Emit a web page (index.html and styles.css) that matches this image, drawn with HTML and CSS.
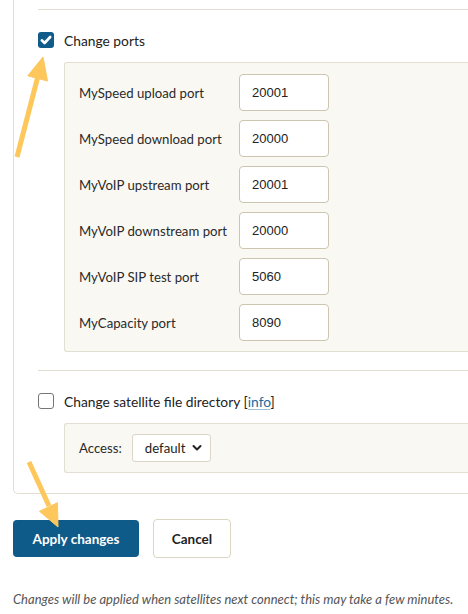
FILE: index.html
```html
<!DOCTYPE html>
<html>
<head>
<meta charset="utf-8">
<link rel="stylesheet" href="styles.css">
</head>
<body>
<div class="page">
  <div class="panel">
    <hr class="sep">
    <div class="section">
      <label class="check-row">
        <span class="cb cb-on"><svg viewBox="0 0 16 16" width="16" height="16"><path d="M3.8 8.3 L6.6 11 L12.2 5" fill="none" stroke="#fff" stroke-width="2.6" stroke-linecap="round" stroke-linejoin="round"/></svg></span>
        <span class="check-text">Change ports</span>
      </label>
      <div class="box ports">
        <span class="lbl">MySpeed upload port</span><span class="inp">20001</span>
        <span class="lbl">MySpeed download port</span><span class="inp">20000</span>
        <span class="lbl">MyVoIP upstream port</span><span class="inp">20001</span>
        <span class="lbl">MyVoIP downstream port</span><span class="inp">20000</span>
        <span class="lbl">MyVoIP SIP test port</span><span class="inp">5060</span>
        <span class="lbl">MyCapacity port</span><span class="inp">8090</span>
      </div>
    </div>
    <hr class="sep">
    <div class="section">
      <label class="check-row">
        <span class="cb"></span>
        <span class="check-text">Change satellite file directory [<a class="info">info</a>]</span>
      </label>
      <div class="box access">
        <span class="lbl">Access:</span>
        <span class="select">default<svg viewBox="0 0 10 8" width="10" height="8"><path d="M1.5 2 L5 5.5 L8.5 2" fill="none" stroke="#222" stroke-width="2" stroke-linecap="round" stroke-linejoin="round"/></svg></span>
      </div>
    </div>
  </div>
  <div class="actions">
    <span class="btn btn-primary">Apply changes</span>
    <span class="btn btn-secondary">Cancel</span>
  </div>
  <p class="note">Changes will be applied when satellites next connect; this may take a few minutes.</p>
</div>
<svg class="arrows" width="468" height="614" viewBox="0 0 468 614">
  <g fill="#fdc75c" stroke="#fdc75c">
    <line x1="17" y1="157" x2="38" y2="76" stroke-width="5"/>
    <polygon points="43,57 47.5,81 27.8,75.8" stroke-width="1" stroke-linejoin="round"/>
    <line x1="29" y1="462" x2="49" y2="506" stroke-width="5"/>
    <polygon points="58,527 57.5,502.7 39.5,511.3" stroke-width="1" stroke-linejoin="round"/>
  </g>
</svg>
</body>
</html>
```
FILE: styles.css
```css
html, body {
  margin: 0;
  padding: 0;
  background: #fff;
  overflow: hidden;
}
body {
  width: 468px;
  height: 614px;
  position: relative;
  font-family: Lato, "Open Sans", sans-serif;
  font-size: 13.2px;
  color: #2a2a2a;
}
.page {
  padding-left: 13px;
}
.panel {
  border: 1px solid #e3ded2;
  border-top: none;
  border-right: none;
  border-radius: 0 0 0 5px;
  padding: 9px 0 20px 24px;
  margin-right: -20px;
}
.sep {
  border: none;
  border-top: 1px solid #e3ded2;
  margin: 0;
  height: 0;
}
.section {
  padding-top: 21px;
  padding-bottom: 18px;
}
.section:last-child {
  padding-bottom: 0;
}
.check-row {
  display: flex;
  align-items: center;
  gap: 10px;
  height: 18px;
  margin-bottom: 13px;
}
.cb {
  width: 16px;
  height: 16px;
  box-sizing: border-box;
  border: 1.5px solid #767676;
  border-radius: 3px;
  display: block;
  flex: none;
}
.cb-on {
  background: #115b8b;
  border: none;
}
.cb svg { display: block; }
.check-text {
  font-size: 13.8px;
  color: #222;
}
.info {
  color: #1c6aa0;
  text-decoration: underline;
  text-decoration-color: #9fc0d8;
  text-underline-offset: 2px;
}
.box {
  margin-left: 26px;
  background: #faf8f3;
  border: 1px solid #e3ded2;
  border-right: none;
  border-radius: 3px 0 0 3px;
}
.ports {
  display: grid;
  grid-template-columns: 160px 90px;
  row-gap: 9px;
  padding: 11px 0 10px 14px;
  align-items: center;
}
.lbl {
  color: #2a2a2a;
}
.inp {
  box-sizing: border-box;
  height: 37px;
  width: 90px;
  background: #fff;
  border: 1px solid #cdc5b0;
  border-radius: 4px;
  padding-left: 12px;
  display: flex;
  align-items: center;
  color: #222;
  font-family: "Liberation Sans", Arial, sans-serif;
  font-size: 13px;
}
.access {
  display: flex;
  align-items: center;
  padding: 10px 0 10px 14px;
  gap: 10px;
}
.select {
  box-sizing: border-box;
  height: 28px;
  width: 79px;
  background: #fff;
  border: 1px solid #ddd6c6;
  border-radius: 3px;
  display: flex;
  align-items: center;
  justify-content: space-between;
  padding: 0 8px 0 12px;
  color: #222;
}
.select svg { display: block; }
.actions {
  display: flex;
  align-items: center;
  gap: 14px;
  margin-top: 25px;
}
.btn {
  box-sizing: border-box;
  display: flex;
  align-items: center;
  justify-content: center;
  font-weight: 700;
  font-size: 13.5px;
  border-radius: 4px;
}
.btn-primary {
  background: #0e5a89;
  color: #fff;
  width: 126px;
  height: 37px;
}
.btn-secondary {
  background: #fff;
  color: #222;
  border: 1px solid #dcd5c2;
  width: 78px;
  height: 39px;
}
.note {
  margin: 33px 0 0;
  font-style: italic;
  font-size: 13px;
  color: #555;
}
.arrows {
  position: absolute;
  left: 0;
  top: 0;
  pointer-events: none;
}
```
